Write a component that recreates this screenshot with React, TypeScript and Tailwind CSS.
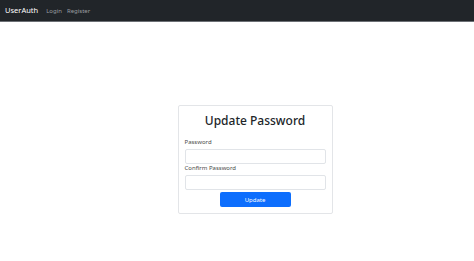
export default function App() {
  return (
    <div className="flex min-h-[261px] flex-col bg-white font-['Noto_Sans',sans-serif]">
      {/* navbar */}
      <nav className="flex h-[22px] items-center border-b border-[#6c7075] bg-[#212529] px-[5px]">
        <span className="mr-[8px] text-[7.5px] leading-none text-white">UserAuth</span>
        <a className="mr-[5px] text-[6px] leading-none text-[#9a9da0]">Login</a>
        <a className="text-[6px] leading-none text-[#9a9da0]">Register</a>
      </nav>

      <div className="flex flex-1 items-center justify-center pb-[6px] pl-[36px] pt-[4px]">
        <div className="mt-[38px] w-[155px] rounded-[2px] border border-[#e3e5e8] px-[6px] pb-[6px] pt-[6px]">
          <h1 className="mb-[8px] text-center text-[12px] font-medium leading-[18px] text-[#212529]">
            Update Password
          </h1>
          <form className="flex flex-col">
            <label className="mb-[2px] text-[6px] leading-[9px] text-[#4a4a4a]">Password</label>
            <input
              type="password"
              className="h-[15px] rounded-[2px] border border-[#e1e4e8] outline-none"
            />
            <label className="mb-[2px] text-[6px] leading-[9px] text-[#4a4a4a]">Confirm Password</label>
            <input
              type="password"
              className="mb-[2px] h-[15px] rounded-[2px] border border-[#e1e4e8] outline-none"
            />
            <button
              type="button"
              className="mx-auto h-[15px] w-[71px] rounded-[2px] bg-[#0d6efd] text-[6px] leading-none text-white"
            >
              Update
            </button>
          </form>
        </div>
      </div>
    </div>
  );
}
